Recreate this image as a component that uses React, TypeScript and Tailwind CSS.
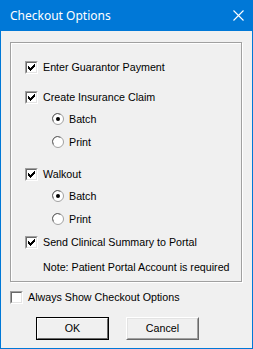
import React from 'react';

function CheckBox({ checked }: { checked?: boolean }) {
  return (
    <div className="w-[13px] h-[13px] shrink-0 border-t border-l border-[#a0a0a0] border-b-white border-r-white border-b border-r">
      <div className="w-full h-full border-t border-l border-[#696969] border-b-[#e3e3e3] border-r-[#e3e3e3] border-b border-r bg-white flex items-center justify-center">
        {checked && (
          <svg width="7" height="7" viewBox="0 0 7 7" className="block">
            <path d="M0 2h1v1h1v1h1V3h1V2h1V1h1V0h1v3H6v1H5v1H4v1H3v1H2V6H1V5H0z" fill="#000" />
          </svg>
        )}
      </div>
    </div>
  );
}

function Radio({ checked }: { checked?: boolean }) {
  return (
    <svg width="12" height="12" viewBox="0 0 12 12" className="shrink-0 block">
      <circle cx="6" cy="6" r="5.5" fill="#fff" stroke="#a0a0a0" />
      <path d="M1.5 8.5A5 5 0 0 1 8.5 1.5" fill="none" stroke="#696969" />
      {checked && <circle cx="6" cy="6" r="2" fill="#000" />}
    </svg>
  );
}

function CheckRow({ label, checked, className }: { label: string; checked?: boolean; className?: string }) {
  return (
    <div className={`flex items-center h-[16px] pl-[14px] ${className ?? ''}`}>
      <CheckBox checked={checked} />
      <span className="ml-[5px]">{label}</span>
    </div>
  );
}

function RadioRow({ label, checked, className }: { label: string; checked?: boolean; className?: string }) {
  return (
    <div className={`flex items-center h-[16px] pl-[41px] ${className ?? ''}`}>
      <Radio checked={checked} />
      <span className="ml-[5px]">{label}</span>
    </div>
  );
}

export default function App() {
  return (
    <div
      className="w-[253px] h-[349px] bg-[#f0f0f0] border-x border-b border-[#0078d7] flex flex-col text-[10.7px] text-black leading-none"
      style={{ fontFamily: '"Liberation Sans", Arial, sans-serif' }}
    >
      {/* Title bar */}
      <div className="h-[31px] -mx-px bg-[#0078d7] flex items-center justify-between pl-[10px] pr-[9px] shrink-0">
        <span className="text-white text-[12px]" style={{ fontFamily: '"Noto Sans", "Open Sans", sans-serif' }}>
          Checkout Options
        </span>
        <svg width="11" height="11" viewBox="0 0 11 11" className="block">
          <path d="M0.5 0.5l10 10M10.5 0.5l-10 10" stroke="#fff" strokeWidth="1.1" />
        </svg>
      </div>

      <div className="flex flex-col px-[9px] pt-[11px]">
        {/* Group box */}
        <div className="h-[240px] w-[232px] border border-[#a0a0a0] shadow-[inset_1px_1px_0_#fff,1px_1px_0_#fff] flex flex-col pt-[16px]">
          <CheckRow label="Enter Guarantor Payment" checked />
          <CheckRow label="Create Insurance Claim" checked className="mt-[14px]" />
          <RadioRow label="Batch" checked className="mt-[6px]" />
          <RadioRow label="Print" className="mt-[7px]" />
          <CheckRow label="Walkout" checked className="mt-[16px]" />
          <RadioRow label="Batch" checked className="mt-[6px]" />
          <RadioRow label="Print" className="mt-[7px]" />
          <CheckRow label="Send Clinical Summary to Portal" checked className="mt-[7px]" />
          <div className="flex items-center h-[16px] pl-[32px] mt-[9px]">Note: Patient Portal Account is required</div>
        </div>

        <div className="flex items-center h-[16px] mt-[7px]">
          <CheckBox />
          <span className="ml-[5px]">Always Show Checkout Options</span>
        </div>

        {/* Buttons */}
        <div className="flex pl-[26px] gap-[17px] mt-[12px]">
          <button className="w-[73px] h-[23px] border border-black bg-[#f0f0f0] p-0">
            <div className="w-full h-full border-t border-l border-white border-b border-r border-b-[#696969] border-r-[#696969] flex items-center justify-center">
              OK
            </div>
          </button>
          <button className="w-[73px] h-[23px] border-t border-l border-white border-b border-r border-b-[#696969] border-r-[#696969] bg-[#f0f0f0] p-0">
            <div className="w-full h-full border-t border-l border-[#e3e3e3] border-b border-r border-b-[#a0a0a0] border-r-[#a0a0a0] flex items-center justify-center">
              Cancel
            </div>
          </button>
        </div>
      </div>
    </div>
  );
}
